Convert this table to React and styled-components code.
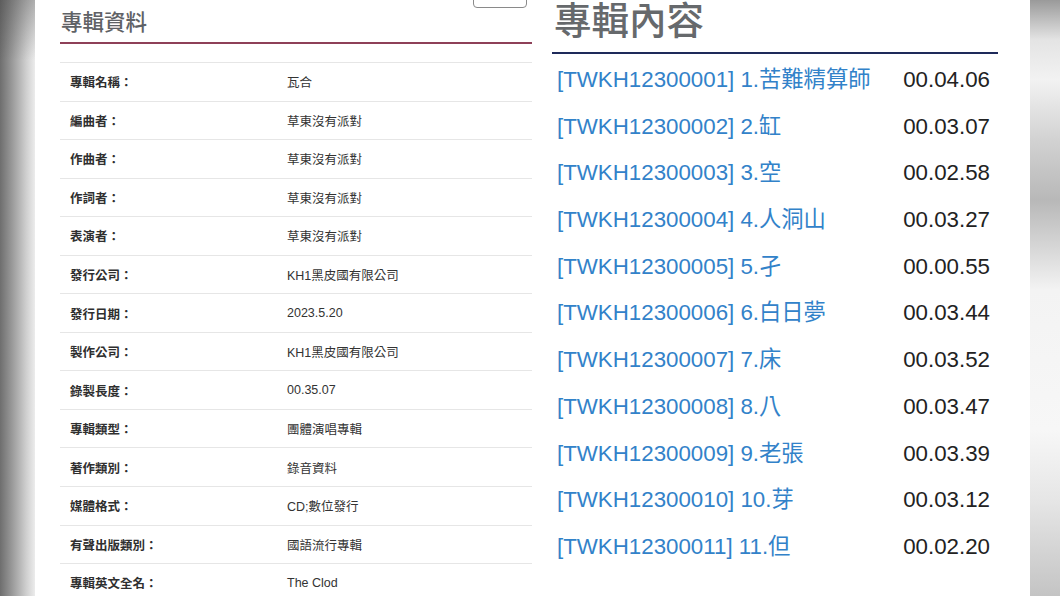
import React from "react";
import styled, { createGlobalStyle } from "styled-components";

const Global = createGlobalStyle`
  html, body { margin: 0; padding: 0; background: #fff; }
  body { font-family: "Liberation Sans", "Noto Sans CJK TC", sans-serif; }
`;

const Page = styled.div`
  width: 1060px;
  height: 596px;
  display: flex;
  overflow: hidden;
  background: #fff;
`;

const LeftShade = styled.div`
  width: 35px;
  flex: none;
  background:
    linear-gradient(to bottom, rgba(60,60,60,0.35) 0px, rgba(60,60,60,0) 60px),
    linear-gradient(to right, #6e6e6e 0%, #9a9a9a 35%, #cfcfcf 75%, #ececec 100%);
`;

const RightShade = styled.div`
  width: 30px;
  flex: none;
  background: linear-gradient(
    to bottom,
    #9a9a9a 0px,
    #e4e4e4 40px,
    #f2f2f2 80px,
    #d2d2d2 140px,
    #b8b8b8 200px,
    #d8d8d8 250px,
    #f3f3f3 290px,
    #f7f7f7 430px,
    #e6e6e6 500px,
    #c4c4c4 596px
  );
`;

const Content = styled.div`
  flex: 1;
  display: grid;
  grid-template-columns: 472px 446px;
  column-gap: 20px;
  padding-left: 25px;
`;

const Panel = styled.section`
  display: flex;
  flex-direction: column;
`;

const InfoHeader = styled.div`
  height: 42px;
  display: flex;
  justify-content: space-between;
  align-items: flex-start;
  border-bottom: 2px solid #8e4058;
  box-sizing: content-box;
`;

const InfoTitle = styled.h2`
  margin: 7px 0 0 1px;
  font-size: 21.5px;
  line-height: 32px;
  font-weight: 500;
  color: #5f6266;
`;

const BackButton = styled.button`
  width: 54px;
  height: 30px;
  margin-top: -22px;
  margin-right: 5px;
  border: 1px solid #8a8a8a;
  border-radius: 4px;
  background: #fff;
`;

const Table = styled.div`
  margin-top: 18px;
  display: flex;
  flex-direction: column;
`;

const Row = styled.div`
  display: grid;
  grid-template-columns: 227px 1fr;
  align-items: center;
  height: 38.55px;
  border-top: 1px solid #e6e6e6;
  box-sizing: border-box;
  font-size: 12.5px;
  color: #333;
`;

const Label = styled.div`
  padding-left: 10px;
  font-weight: 700;
  color: #2f2f2f;
`;

const Value = styled.div`
  color: #333;
`;

const ContentHeader = styled.div`
  height: 52px;
  border-bottom: 2px solid #1e2a5a;
  box-sizing: content-box;
`;

const ContentTitle = styled.h1`
  margin: 1px 0 0 2px;
  font-size: 37.5px;
  line-height: 40px;
  font-weight: 500;
  color: #66696c;
`;

const TrackList = styled.ol`
  list-style: none;
  margin: 3px 0 0;
  padding: 0;
`;

const Track = styled.li`
  height: 46.7px;
  line-height: 46.7px;
  display: flex;
  align-items: baseline;
  justify-content: space-between;
  padding: 0 8px 0 5px;
  font-size: 22.3px;
`;

const TrackName = styled.a`
  color: #3282c9;
  text-decoration: none;
`;

const Duration = styled.span`
  color: #222;
`;

const info = [
  ["專輯名稱：", "瓦合"],
  ["編曲者：", "草東沒有派對"],
  ["作曲者：", "草東沒有派對"],
  ["作詞者：", "草東沒有派對"],
  ["表演者：", "草東沒有派對"],
  ["發行公司：", "KH1黑皮國有限公司"],
  ["發行日期：", "2023.5.20"],
  ["製作公司：", "KH1黑皮國有限公司"],
  ["錄製長度：", "00.35.07"],
  ["專輯類型：", "團體演唱專輯"],
  ["著作類別：", "錄音資料"],
  ["媒體格式：", "CD;數位發行"],
  ["有聲出版類別：", "國語流行專輯"],
  ["專輯英文全名：", "The Clod"],
];

const tracks = [
  ["[TWKH12300001] 1.苦難精算師", "00.04.06"],
  ["[TWKH12300002] 2.缸", "00.03.07"],
  ["[TWKH12300003] 3.空", "00.02.58"],
  ["[TWKH12300004] 4.人洞山", "00.03.27"],
  ["[TWKH12300005] 5.孑", "00.00.55"],
  ["[TWKH12300006] 6.白日夢", "00.03.44"],
  ["[TWKH12300007] 7.床", "00.03.52"],
  ["[TWKH12300008] 8.八", "00.03.47"],
  ["[TWKH12300009] 9.老張", "00.03.39"],
  ["[TWKH12300010] 10.芽", "00.03.12"],
  ["[TWKH12300011] 11.但", "00.02.20"],
];

export default function App() {
  return (
    <>
      <Global />
      <Page>
        <LeftShade />
        <Content>
          <Panel>
            <InfoHeader>
              <InfoTitle>專輯資料</InfoTitle>
              <BackButton aria-label="back" />
            </InfoHeader>
            <Table>
              {info.map(([k, v]) => (
                <Row key={k}>
                  <Label>{k}</Label>
                  <Value>{v}</Value>
                </Row>
              ))}
            </Table>
          </Panel>
          <Panel>
            <ContentHeader>
              <ContentTitle>專輯內容</ContentTitle>
            </ContentHeader>
            <TrackList>
              {tracks.map(([n, d]) => (
                <Track key={n}>
                  <TrackName href="#">{n}</TrackName>
                  <Duration>{d}</Duration>
                </Track>
              ))}
            </TrackList>
          </Panel>
        </Content>
        <RightShade />
      </Page>
    </>
  );
}
